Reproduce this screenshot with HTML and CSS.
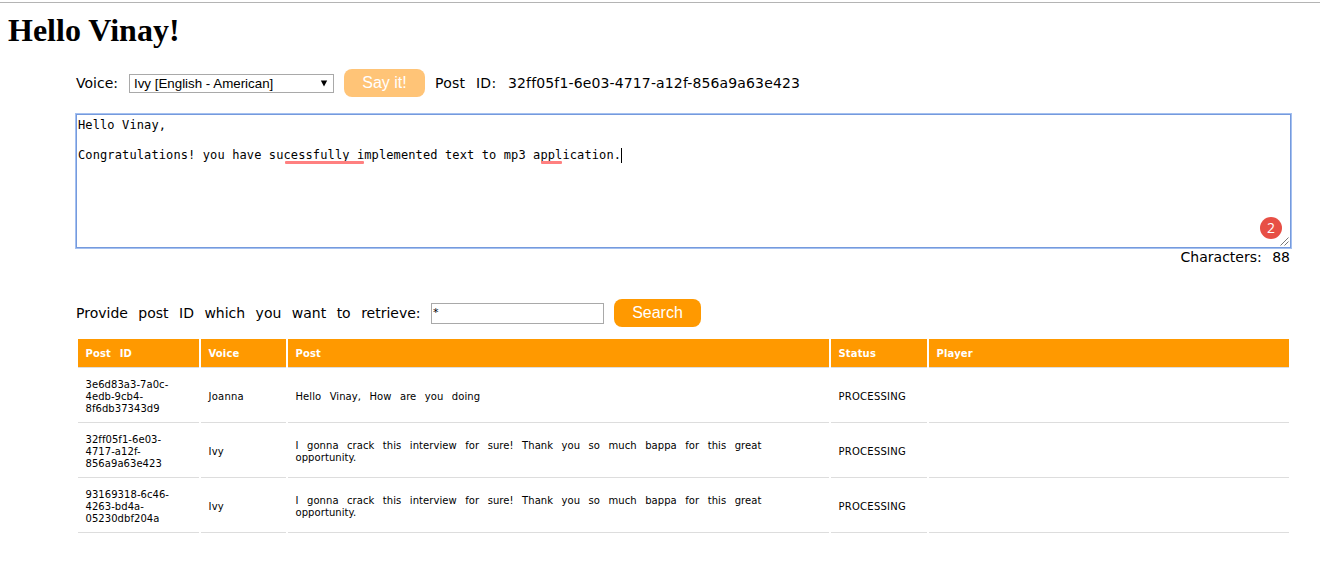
FILE: index.html
```html
<!DOCTYPE html>
<html lang="en">
<head>
<meta charset="utf-8">
<title>Text to speech</title>
<link rel="stylesheet" href="styles.css">
</head>
<body>
<h1 class="title">Hello Vinay!</h1>
<main class="container">
  <div class="row">
    <span class="label voice-label">Voice:</span>
    <div class="select"><span>Ivy [English - American]</span><svg class="arrow" width="8" height="7" viewBox="0 0 8 7"><path d="M0.8 0.5H7.2L4 6.5Z"/></svg></div>
    <button class="button button-say">Say it!</button>
    <span class="label post-label">Post ID:</span>
    <span class="label post-id">32ff05f1-6e03-4717-a12f-856a9a63e423</span>
  </div>
  <div class="editor">
    <div class="line">Hello Vinay,</div>
    <div class="line">&nbsp;</div>
    <div class="line"><span class="typed">Congratulations! you have sucessfully implemented text to mp3 application.</span><i class="caret"></i></div>
    <i class="mark mark-first"></i>
    <i class="mark mark-second"></i>
    <span class="badge">2</span>
    <svg class="grip" width="9" height="9" viewBox="0 0 9 9"><path d="M0.5 8.5L8.5 0.5M4.5 8.5L8.5 4.5"/></svg>
  </div>
  <div class="count"><span class="label">Characters: 88</span></div>
  <div class="row search-row">
    <span class="label search-label">Provide post ID which you want to retrieve:</span>
    <input class="input" type="text" value="*">
    <button class="button button-search">Search</button>
  </div>
  <table class="posts">
    <colgroup><col class="col-id"><col class="col-voice"><col class="col-post"><col class="col-status"><col class="col-player"></colgroup>
    <thead>
      <tr><th>Post ID</th><th>Voice</th><th>Post</th><th>Status</th><th>Player</th></tr>
    </thead>
    <tbody>
      <tr><td>3e6d83a3-7a0c-<br>4edb-9cb4-<br>8f6db37343d9</td><td class="voice">Joanna</td><td class="post">Hello Vinay, How are you doing</td><td class="status">PROCESSING</td><td></td></tr>
      <tr><td>32ff05f1-6e03-<br>4717-a12f-<br>856a9a63e423</td><td class="voice">Ivy</td><td class="post">I gonna crack this interview for sure! Thank you so much bappa for this great<br>opportunity.</td><td class="status">PROCESSING</td><td></td></tr>
      <tr><td>93169318-6c46-<br>4263-bd4a-<br>05230dbf204a</td><td class="voice">Ivy</td><td class="post">I gonna crack this interview for sure! Thank you so much bappa for this great<br>opportunity.</td><td class="status">PROCESSING</td><td></td></tr>
    </tbody>
  </table>
</main>
</body>
</html>
```
FILE: styles.css
```css
* { box-sizing: border-box; }
body {
  margin: 0;
  padding-top: 2px;
  background: #fff;
  color: #000;
  font-family: "DejaVu Sans", sans-serif;
}
.title {
  margin: 0;
  padding: 8px 8px 0;
  height: 67px;
  border-top: 1px solid #b4b4b4;
  font: bold 32px/38px "Liberation Serif", serif;
}
.container { width: 1216px; margin-left: 75px; }
.row { display: flex; align-items: center; height: 28px; white-space: nowrap; }
.label { font-size: 14px; line-height: 17px; word-spacing: 6px; padding-left: 1px; white-space: nowrap; }
.voice-label { width: 54px; }
.select {
  display: flex; align-items: center; justify-content: space-between;
  width: 205px; height: 19px; margin-top: 1px; padding: 0 5px 0 4px;
  border: 1px solid #a9a9a9;
  font: 13.33px/17px "Liberation Sans", sans-serif;
}
.arrow { fill: #000; }
.button {
  height: 28px; padding: 0; border: 0; border-radius: 8px;
  background: #f90; color: #fff;
  font: 16px/26px "Liberation Sans", sans-serif;
}
.button-say { width: 81px; margin: 0 9px 0 10px; background: #ffc477; }
.button-search { width: 87px; margin-left: 10px; }
.post-label { width: 74px; letter-spacing: 0.25px; }
.post-id { padding-left: 0; letter-spacing: 0.14px; }
.editor {
  position: relative;
  height: 136px; margin-top: 16px; padding: 4px 2px; width: 1217px;
  border: 1px solid #a4c0f0;
  box-shadow: inset 0 0 0 1px #759add;
  font: 12px/15px "DejaVu Sans Mono", monospace;
  letter-spacing: 0.115px;
  white-space: nowrap;
}
.line { display: flex; height: 15px; }
.caret { width: 1px; height: 15px; background: #000; }
.mark { position: absolute; height: 3px; border-radius: 1px; background: #ff8080; }
.mark-first { left: 209px; top: 47px; width: 79px; }
.mark-second { left: 465px; top: 47px; width: 21px; }
.badge {
  position: absolute; right: 9px; bottom: 9px; width: 22px; height: 22px;
  border-radius: 50%; background: #e74f45; color: #fff;
  font: 14px/22px "Open Sans", sans-serif; letter-spacing: 0; text-align: center;
}
.grip { position: absolute; right: 2px; bottom: 2px; fill: none; stroke: #777; }
.count { height: 50px; padding-right: 1px; text-align: right; line-height: 17px; }
.count .label { display: block; }
.search-label { width: 356px; }
.input {
  width: 173px; height: 21px; margin: 1px 0 0; padding: 0 1px 3px;
  border: 1px solid #a9a9a9; border-radius: 0; outline: 0;
  font: 11px "DejaVu Sans", sans-serif;
}
.posts {
  width: 1215px; margin: 12px 0 0 1px; table-layout: fixed;
  border-collapse: separate; border-spacing: 2px 0;
  font-size: 10px; line-height: 12px; word-spacing: 5px;
}
.col-id { width: 121px; }
.col-voice { width: 85px; }
.col-post { width: 541px; }
.col-status { width: 96px; }
.posts th, .posts td { padding: 0 7px 0 7.5px; border-bottom: 1px solid #ddd; text-align: left; white-space: nowrap; }
.posts th { height: 29px; padding-top: 1px; background: #f90; background-clip: padding-box; color: #fff; letter-spacing: 0.15px; }
.posts td { height: 55px; padding-top: 4px; letter-spacing: 0.06px; }
.posts .voice { letter-spacing: 0.25px; }
.posts .post { letter-spacing: 0.07px; word-spacing: 5.2px; }
.posts .status { letter-spacing: 0.25px; }
```
